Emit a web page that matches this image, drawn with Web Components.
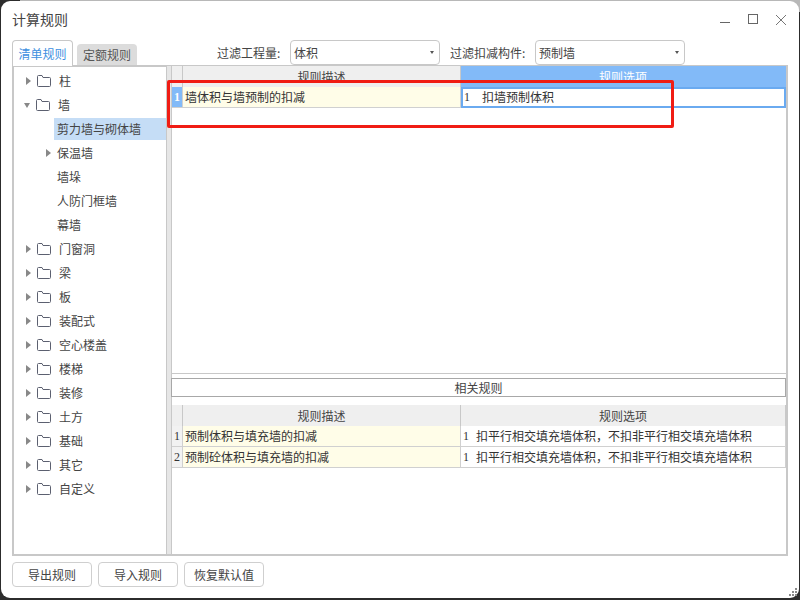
<!DOCTYPE html>
<html lang="zh">
<head>
<meta charset="utf-8">
<title>计算规则</title>
<style>
    html, body { margin: 0; height: 100%; overflow: hidden; }
    html { background: linear-gradient(90deg, #2c2c2c 20px, #b8b8b8 20px) 0 0 / 100% 12px no-repeat, #2c2c2c; }
    body { font: 12px/16px "Noto Sans CJK SC", "Liberation Sans", sans-serif; color: #333; }
</style>
</head>
<body>
<rule-window caption="计算规则">
    <tab-bar slot="tabs"></tab-bar>
    <filter-bar slot="filters"></filter-bar>
    <rule-tree slot="tree"></rule-tree>
    <rule-grid slot="top" id="topGrid" height="309" active></rule-grid>
    <rule-grid slot="bottom" id="bottomGrid" height="149"></rule-grid>
    <flat-button slot="actions">导出规则</flat-button>
    <flat-button slot="actions">导入规则</flat-button>
    <flat-button slot="actions">恢复默认值</flat-button>
</rule-window>

<script>
(function () {
    'use strict';

    customElements.define('rule-window', class extends HTMLElement {
        constructor() {
            super();
            let shadowRoot = this.attachShadow({ mode: 'open' });
            shadowRoot.innerHTML = `
                <style>
                    :host {
                        display: flex;
                        flex-direction: column;
                        position: relative;
                        box-sizing: border-box;
                        width: 798px;
                        height: 597px;
                        margin: 1px 0 0 1px;
                        background: #fff;
                        border-radius: 9px;
                    }
                    #title {
                        display: flex;
                        align-items: center;
                        justify-content: space-between;
                        height: 39px;
                        padding: 0 13px 4px 11px;
                        box-sizing: border-box;
                        font-size: 14px;
                        color: #444;
                    }
                    #controls { display: flex; gap: 18px; align-items: center; }
                    #controls svg { display: block; }
                    #controls .close { margin-top: 2px; }
                    #head { display: flex; height: 25px; padding-left: 11px; position: relative; z-index: 1; }
                    #body {
                        display: flex;
                        height: 491px;
                        margin-left: 11px;
                        width: 776px;
                        box-sizing: border-box;
                    }
                    #treePane {
                        box-sizing: border-box;
                        width: 155px;
                        border: solid #c8c8c8;
                        border-width: 2px 1px 2px 2px;
                    }
                    #split {
                        box-sizing: border-box;
                        width: 4px;
                        background: #e6e6e6;
                        border-top: 1px solid #c8c8c8;
                        border-bottom: 2px solid #c8c8c8;
                    }
                    #right {
                        flex: 1;
                        display: flex;
                        flex-direction: column;
                        box-sizing: border-box;
                        border: solid #c8c8c8;
                        border-width: 1px 2px 2px 1px;
                    }
                    #related {
                        box-sizing: border-box;
                        margin: 4px 0 8px -1px;
                        height: 19px;
                        line-height: 18px;
                        border: 1px solid #a8a8a8;
                        text-align: center;
                        color: #444;
                    }
                    #actions { display: flex; gap: 6px; padding: 6px 0 0 11px; }
                    #mark {
                        position: absolute;
                        left: 166px;
                        top: 79px;
                        width: 501px;
                        height: 42px;
                        border: 3px solid #f01c14;
                        border-radius: 2px;
                        z-index: 2;
                    }
                    #grip { position: absolute; right: 2px; bottom: 2px; display: block; }
                </style>
                <div id="title">
                    <span id="caption"></span>
                    <div id="controls">
                        <svg width="10" height="10" viewBox="0 0 10 10"><path d="M0 8.5h10" stroke="#666" fill="none"/></svg>
                        <svg width="10" height="10" viewBox="0 0 10 10"><rect x=".5" y=".5" width="9" height="9" stroke="#666" fill="none"/></svg>
                        <svg class="close" width="10" height="10" viewBox="0 0 10 10"><path d="M0 0l10 10M10 0L0 10" stroke="#777" fill="none"/></svg>
                    </div>
                </div>
                <div id="head"><slot name="tabs"></slot><slot name="filters"></slot></div>
                <div id="body">
                    <div id="treePane"><slot name="tree"></slot></div>
                    <div id="split"></div>
                    <div id="right">
                        <slot name="top"></slot>
                        <div id="related">相关规则</div>
                        <slot name="bottom"></slot>
                    </div>
                </div>
                <div id="actions"><slot name="actions"></slot></div>
                <svg id="grip" width="8" height="8" viewBox="0 0 8 8" fill="#8a8a8a">
                    <rect x="6" y="0" width="2" height="2"/>
                    <rect x="3" y="3" width="2" height="2"/><rect x="6" y="3" width="2" height="2"/>
                    <rect x="0" y="6" width="2" height="2"/><rect x="3" y="6" width="2" height="2"/><rect x="6" y="6" width="2" height="2"/>
                </svg>
                <div id="mark"></div>
            `;
            shadowRoot.querySelector('#caption').textContent = this.getAttribute('caption');
        }
    });

    customElements.define('tab-bar', class extends HTMLElement {
        constructor() {
            super();
            let shadowRoot = this.attachShadow({ mode: 'open' });
            shadowRoot.innerHTML = `
                <style>
                    :host { display: flex; align-items: flex-end; gap: 4px; width: 125px; height: 25px; }
                    .tab {
                        box-sizing: border-box;
                        text-align: center;
                        border-radius: 4px 4px 0 0;
                    }
                    .on {
                        width: 61px;
                        height: 26px;
                        margin-bottom: -1px;
                        line-height: 25px;
                        color: #3d8fe0;
                        background: #fff;
                        border: 1px solid #c8c8c8;
                        border-bottom: 0;
                    }
                    .off {
                        width: 60px;
                        height: 21px;
                        line-height: 22px;
                        color: #555;
                        background: #dcdcdc;
                    }
                </style>
                <div class="tab on">清单规则</div>
                <div class="tab off">定额规则</div>
            `;
        }
    });

    customElements.define('filter-bar', class extends HTMLElement {
        constructor() {
            super();
            let shadowRoot = this.attachShadow({ mode: 'open' });
            shadowRoot.innerHTML = `
                <style>
                    :host { display: flex; align-items: center; height: 25px; padding-left: 80px; color: #444; }
                    .l1 { width: 73px; }
                    .l2 { width: 85px; }
                    .box {
                        display: flex;
                        align-items: center;
                        justify-content: space-between;
                        box-sizing: border-box;
                        width: 150px;
                        height: 25px;
                        margin-right: 10px;
                        padding: 0 5px 0 3px;
                        border: 1px solid #c8c8c8;
                        border-radius: 4px;
                        background: #fff;
                    }
                    .box i { border: 2.5px solid transparent; border-top: 3px solid #555; border-bottom: 0; }
                </style>
                <span class="l1">过滤工程量:</span>
                <div class="box"><span>体积</span><i></i></div>
                <span class="l2">过滤扣减构件:</span>
                <div class="box"><span>预制墙</span><i></i></div>
            `;
        }
    });

    // name, depth, arrow ('' | 'right' | 'down'), folder, selected
    const TREE = [
        ['柱', 0, 'right', true],
        ['墙', 0, 'down', true],
        ['剪力墙与砌体墙', 1, '', false, true],
        ['保温墙', 1, 'right', false],
        ['墙垛', 1, '', false],
        ['人防门框墙', 1, '', false],
        ['幕墙', 1, '', false],
        ['门窗洞', 0, 'right', true],
        ['梁', 0, 'right', true],
        ['板', 0, 'right', true],
        ['装配式', 0, 'right', true],
        ['空心楼盖', 0, 'right', true],
        ['楼梯', 0, 'right', true],
        ['装修', 0, 'right', true],
        ['土方', 0, 'right', true],
        ['基础', 0, 'right', true],
        ['其它', 0, 'right', true],
        ['自定义', 0, 'right', true]
    ];

    const FOLDER = `<svg width="14" height="12" viewBox="0 0 14 12"><path d="M.5 2V10.5a1 1 0 0 0 1 1h11a1 1 0 0 0 1-1V3.5a1 1 0 0 0-1-1H6L5 .5H1.5a1 1 0 0 0-1 1z" fill="none" stroke="#5c6070"/></svg>`;

    customElements.define('rule-tree', class extends HTMLElement {
        constructor() {
            super();
            let shadowRoot = this.attachShadow({ mode: 'open' });
            let rows = TREE.map(([name, depth, arrow, folder, selected]) => `
                <div class="row d${depth}">
                    <span class="arrow ${arrow}"></span>
                    ${folder ? `<span class="folder">${FOLDER}</span>` : ''}
                    <span class="name${selected ? ' sel' : ''}">${name}</span>
                </div>`).join('');
            shadowRoot.innerHTML = `
                <style>
                    :host { display: block; padding-top: 2px; color: #444; }
                    .row { display: flex; align-items: center; height: 24px; }
                    .arrow { width: 5px; height: 8px; flex: none; margin-left: 12px; }
                    .d1 .arrow { margin-left: 32px; }
                    .right { border-left: 5px solid #888; border-top: 4px solid transparent; border-bottom: 4px solid transparent; width: 0; height: 0; }
                    .down { border-top: 5px solid #888; border-left: 3.5px solid transparent; border-right: 3.5px solid transparent; width: 0; height: 0; margin-left: 10px; }
                    .folder { display: flex; margin-left: 6px; }
                    .name { margin-left: 8px; line-height: 22px; }
                    .d1 .name { margin-left: 3px; padding-left: 3px; flex: 1; }
                    .sel { background: #c5ddf6; }
                </style>
                ${rows}
            `;
        }
    });

    customElements.define('rule-grid', class extends HTMLElement {
        constructor() {
            super();
            this._rows = [];
            this.attachShadow({ mode: 'open' });
        }

        set rows(rows) {
            this._rows = rows;
            this._render();
        }

        connectedCallback() {
            this._render();
        }

        _render() {
            const active = this.hasAttribute('active');
            const body = this._rows.map((r, i) => `
                <div class="row">
                    <div class="no${active ? ' cur' : ''}">${i + 1}</div>
                    <div class="desc">${r[0]}</div>
                    <div class="opt${active ? ' curopt' : ''}"><b>1</b><span>${r[1]}</span></div>
                </div>`).join('');
            this.shadowRoot.innerHTML = `
                <style>
                    :host {
                        display: block;
                        height: ${this.getAttribute('height')}px;
                        box-sizing: border-box;
                        border-bottom: ${active ? '1px solid #c8c8c8' : '0'};
                        color: #333;
                    }
                    .row { display: grid; grid-template-columns: 11px 278px 1fr; height: 21px; }
                    .row > div { box-sizing: border-box; border-right: 1px solid #d0d0d0; border-bottom: 1px solid #d0d0d0; line-height: 20px; }
                    .row.hd > div {
                        background: #efefef;
                        text-align: center;
                        color: #444;
                        border-color: #c8c8c8;
                        line-height: 21px;
                    }
                    .row.hd .sel { background: #82baf8; color: #fff; border-color: #82baf8; }
                    .no { text-align: center; background: #f2f2f2; font-family: "Liberation Serif", serif; }
                    .row .cur { background: #82baf8; color: #fff; font-weight: bold; }
                    .desc { background: #fffde8; padding-left: 2px; }
                    .opt { display: flex; gap: 7px; padding-left: 2px; background: #fff; }
                    .opt b { font: 12px/20px "Liberation Serif", serif; }
                    .row .curopt { box-shadow: inset 0 0 0 2px #6aaaf0; padding-left: 3px; gap: 12px; border: 0; }
                </style>
                <div class="row hd">
                    <div></div><div>规则描述</div><div class="${active ? 'sel' : ''}">规则选项</div>
                </div>
                ${body}
            `;
        }
    });

    customElements.define('flat-button', class extends HTMLElement {
        constructor() {
            super();
            let shadowRoot = this.attachShadow({ mode: 'open' });
            shadowRoot.innerHTML = `
                <style>
                    :host {
                        display: block;
                        box-sizing: border-box;
                        width: 80px;
                        height: 25px;
                        line-height: 24px;
                        text-align: center;
                        border: 1px solid #cfcfcf;
                        border-radius: 4px;
                        color: #444;
                    }
                </style>
                <slot></slot>
            `;
        }
    });

    document.querySelector('#topGrid').rows = [
        ['墙体积与墙预制的扣减', '扣墙预制体积']
    ];
    document.querySelector('#bottomGrid').rows = [
        ['预制体积与填充墙的扣减', '扣平行相交填充墙体积，不扣非平行相交填充墙体积'],
        ['预制砼体积与填充墙的扣减', '扣平行相交填充墙体积，不扣非平行相交填充墙体积']
    ];
})();
</script>
</body>
</html>
